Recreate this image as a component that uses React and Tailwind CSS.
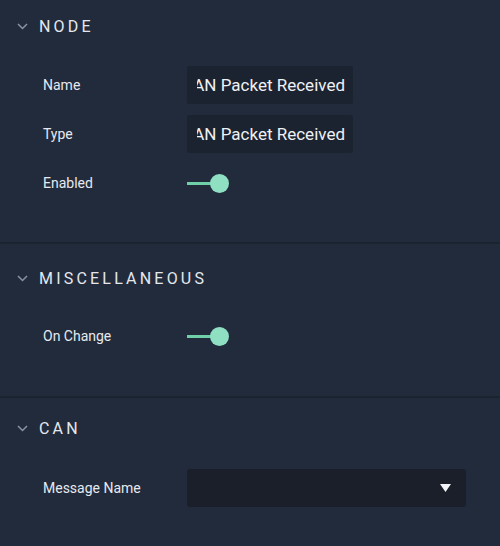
const font = { fontFamily: 'Roboto, "Liberation Sans", sans-serif' };

function SectionHeader({ title }) {
  return (
    <div className="flex h-[52px] items-center pl-[17px]">
      <svg width="11" height="7" viewBox="0 0 11 7" className="mt-[1px]">
        <polyline points="1,1 5.5,5.5 10,1" fill="none" stroke="#8a93a3" strokeWidth="1.5" />
      </svg>
      <span className="ml-[11px] mt-[1px] text-[16px] font-normal tracking-[3.2px] text-[#e4e8ee]">{title}</span>
    </div>
  );
}

function Row({ label, children }) {
  return (
    <div className="flex h-[38px] items-center">
      <div className="w-[187px] pl-[43px] text-[14px] text-[#e6e9ef]">{label}</div>
      {children}
    </div>
  );
}

// text is scrolled to its end, like a focused input, so the start is cut off
function TextBox({ value }) {
  return (
    <div className="flex h-[38px] w-[166px] items-center rounded-[2px] bg-[#1c2330] pl-[10px] pr-[8px] pt-[2px]">
      <div className="flex flex-1 justify-end overflow-hidden">
        <span className="whitespace-nowrap text-[17px] text-[#eef1f5]">{value}</span>
      </div>
    </div>
  );
}

function Toggle() {
  return (
    <div className="flex items-center">
      <div className="h-[3px] w-[26px] bg-[#6fcfa8]" />
      <div className="-ml-[3px] h-[19px] w-[19px] rounded-full bg-[#8fe0c2]" />
    </div>
  );
}

function Divider() {
  return <div className="h-[2px] bg-[#1b2230]" />;
}

export default function App() {
  return (
    <div className="h-[546px] w-[500px] overflow-hidden bg-[#222b3b]" style={font}>
      <SectionHeader title="NODE" />
      <div className="mt-[14px] flex flex-col gap-[11px]">
        <Row label="Name"><TextBox value="CAN Packet Received" /></Row>
        <Row label="Type"><TextBox value="CAN Packet Received" /></Row>
        <Row label="Enabled"><Toggle /></Row>
      </div>
      <div className="h-[40px]" />
      <Divider />

      <div className="pt-[8px]">
        <SectionHeader title="MISCELLANEOUS" />
        <div className="mt-[13px]">
          <Row label="On Change"><Toggle /></Row>
        </div>
      </div>
      <div className="h-[41px]" />
      <Divider />

      <div className="pt-[4px]">
        <SectionHeader title="CAN" />
        <div className="mt-[15px]">
          <Row label="Message Name">
            <div className="flex h-[38px] w-[279px] items-center justify-end rounded-[3px] bg-[#1a1f29] pr-[15px]">
              <svg width="11" height="8" viewBox="0 0 11 8">
                <path d="M0 0 L11 0 L5.5 8 Z" fill="#f2f4f7" />
              </svg>
            </div>
          </Row>
        </div>
      </div>
    </div>
  );
}
